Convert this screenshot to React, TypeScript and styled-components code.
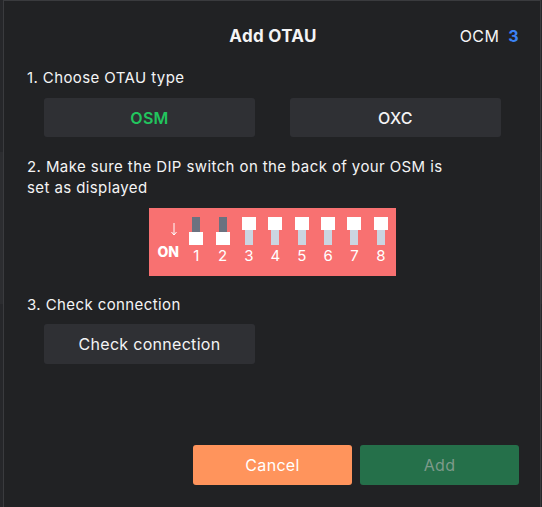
import React from 'react';
import styled, { createGlobalStyle } from 'styled-components';

const GlobalStyle = createGlobalStyle`
  body {
    margin: 0;
    background: #1b1c1f;
    font-family: Inter, "Noto Sans", sans-serif;
  }
`;

const Page = styled.div`
  display: flex;
  height: 507px;
  overflow: hidden;
`;

const Backdrop = styled.div<{ $w: number }>`
  width: ${(p) => p.$w}px;
  background: linear-gradient(#26272a 0 30%, #2c2d30 30% 60%, #26272a 60%);
`;

const Modal = styled.div`
  flex: 1;
  display: flex;
  flex-direction: column;
  background: #212224;
  border: 1px solid #3a3b3e;
  border-bottom: none;
  padding: 24px 21px 22px 23px;
  color: #f4f4f5;
`;

const Header = styled.div`
  display: grid;
  grid-template-columns: 1fr auto 1fr;
  align-items: center;
  line-height: 22px;
`;

const Title = styled.h2`
  grid-column: 2;
  margin: 0;
  font-size: 17px;
  font-weight: 700;
  letter-spacing: 0.3px;
`;

const Device = styled.div`
  justify-self: end;
  font-size: 16px;
  letter-spacing: 0.4px;
  display: flex;
  gap: 9px;
`;

const DeviceNum = styled.span`
  color: #3b82f6;
  font-weight: 700;
`;

const StepLabel = styled.p<{ $top: number }>`
  margin: ${(p) => p.$top}px 0 0;
  font-size: 15px;
  line-height: 21px;
  letter-spacing: 0.4px;
  max-width: 420px;
`;

const TypeRow = styled.div`
  display: grid;
  grid-template-columns: 211px 211px;
  gap: 35px;
  padding-left: 17px;
  margin-top: 10px;
`;

const Button = styled.button<{ $active?: boolean }>`
  height: 39px;
  border: none;
  border-radius: 3px;
  background: #2f3034;
  color: ${(p) => (p.$active ? '#22c55e' : '#f4f4f5')};
  font-family: inherit;
  font-size: 16px;
  letter-spacing: 0.3px;
  font-weight: ${(p) => (p.$active ? 600 : 500)};
  cursor: pointer;
`;

const CheckButton = styled(Button)`
  width: 211px;
  height: 40px;
  margin: 9px 0 0 17px;
  font-weight: 400;
`;

const DipWrap = styled.div`
  display: flex;
  justify-content: center;
  margin-top: 10px;
  padding-right: 1px;
`;

const Dip = styled.div`
  display: flex;
  width: 247px;
  height: 68px;
  box-sizing: border-box;
  padding: 9px 2px 0 0;
  background: #f87171;
`;

const OnLabel = styled.div`
  width: 34px;
  display: flex;
  flex-direction: column;
  align-items: flex-end;
  padding-right: 2px;
  box-sizing: border-box;
`;

const Arrow = styled.svg`
  margin: 6px 4px 0 0;
`;

const OnText = styled.span`
  margin-top: 9px;
  font-size: 14px;
  font-weight: 800;
  line-height: 13px;
  color: #fff;
  padding-right: 2px;
`;

const SwitchCol = styled.div`
  flex: 1;
  display: flex;
  flex-direction: column;
  align-items: center;
`;

const Switch = styled.div<{ $on: boolean }>`
  display: flex;
  flex-direction: ${(p) => (p.$on ? 'column' : 'column-reverse')};
  align-items: center;
  justify-content: flex-end;
  height: 28px;
`;

const Track = styled.div<{ $on: boolean }>`
  width: 8px;
  height: 15px;
  background: ${(p) => (p.$on ? '#6b7280' : '#cbd5e1')};
`;

const Knob = styled.div`
  width: 14px;
  height: 13px;
  background: #fff;
`;

const Digit = styled.span`
  margin-top: 2px;
  font-size: 15px;
  line-height: 18px;
  color: #fff;
`;

const Footer = styled.div`
  margin-top: auto;
  display: flex;
  justify-content: flex-end;
  gap: 8px;
`;

const FooterButton = styled.button<{ $variant: 'cancel' | 'add' }>`
  width: 159px;
  height: 40px;
  border: none;
  border-radius: 3px;
  font-family: inherit;
  font-size: 16px;
  letter-spacing: 0.3px;
  background: ${(p) => (p.$variant === 'cancel' ? '#ff945c' : '#25704a')};
  color: ${(p) => (p.$variant === 'cancel' ? '#fff' : '#7d9a8a')};
  cursor: pointer;
`;

const switches = [true, true, false, false, false, false, false, false];

const App = () => {
  return (
    <>
      <GlobalStyle />
      <Page>
        <Backdrop $w={3} />
        <Modal>
          <Header>
            <Title>Add OTAU</Title>
            <Device>
              OCM <DeviceNum>3</DeviceNum>
            </Device>
          </Header>

          <StepLabel $top={20}>1. Choose OTAU type</StepLabel>
          <TypeRow>
            <Button $active>OSM</Button>
            <Button>OXC</Button>
          </TypeRow>

          <StepLabel $top={19}>
            2. Make sure the DIP switch on the back of your OSM is set as displayed
          </StepLabel>
          <DipWrap>
            <Dip>
              <OnLabel>
                <Arrow width="6" height="13" viewBox="0 0 6 13">
                  <path d="M3 0V12M0.5 9L3 12L5.5 9" stroke="#fff" strokeWidth="1" fill="none" />
                </Arrow>
                <OnText>ON</OnText>
              </OnLabel>
              {switches.map((on, i) => (
                <SwitchCol key={i}>
                  <Switch $on={on}>
                    <Track $on={on} />
                    <Knob />
                  </Switch>
                  <Digit>{i + 1}</Digit>
                </SwitchCol>
              ))}
            </Dip>
          </DipWrap>

          <StepLabel $top={18}>3. Check connection</StepLabel>
          <CheckButton>Check connection</CheckButton>

          <Footer>
            <FooterButton $variant="cancel">Cancel</FooterButton>
            <FooterButton $variant="add">Add</FooterButton>
          </Footer>
        </Modal>
        <Backdrop $w={1} />
      </Page>
    </>
  );
};

export default App;
